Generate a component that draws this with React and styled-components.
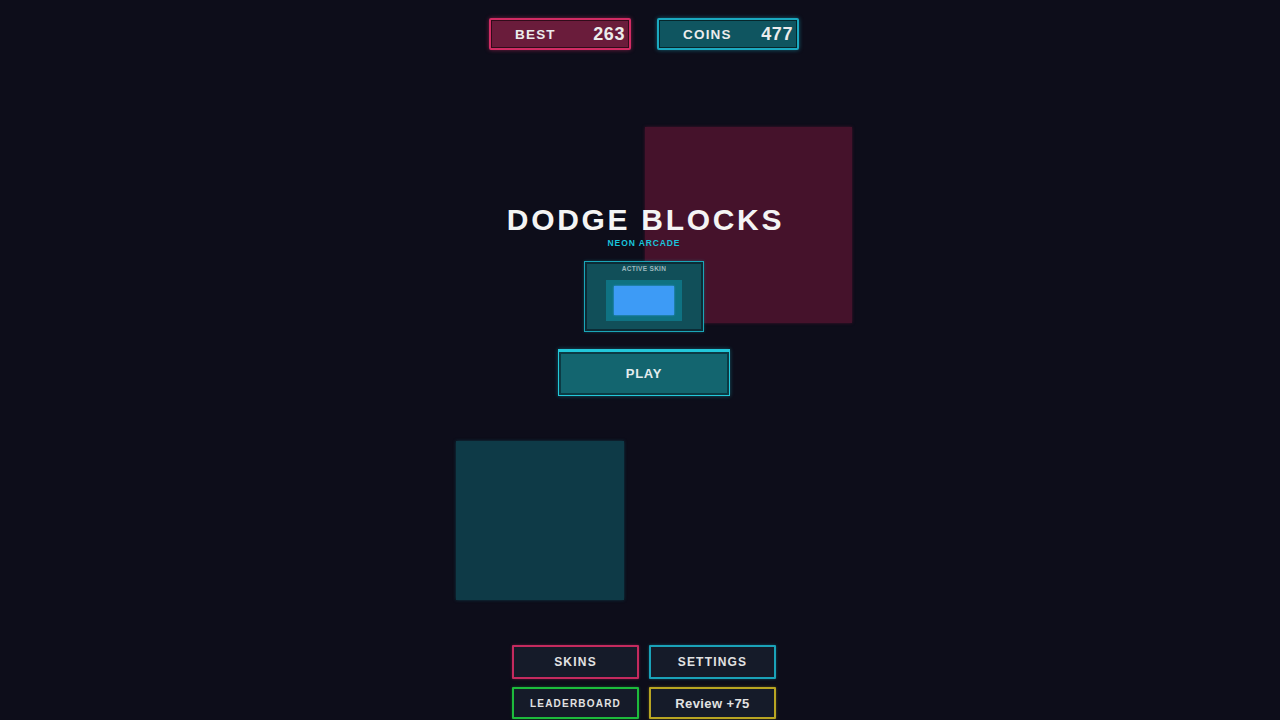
import React from "react";
import styled, { createGlobalStyle } from "styled-components";

const Global = createGlobalStyle`
  html, body { margin: 0; padding: 0; background: #0d0d1a; }
  body { font-family: "Liberation Sans", Arial, sans-serif; }
`;

const Page = styled.div`
  position: relative;
  width: 100%;
  height: 720px;
  overflow: hidden;
  background: #0d0d1a;
  display: flex;
  flex-direction: column;
  align-items: center;
`;

const Block = styled.div`
  position: absolute;
  left: ${(p) => p.$x}px;
  top: ${(p) => p.$y}px;
  width: ${(p) => p.$w}px;
  height: ${(p) => p.$h}px;
  background: ${(p) => p.$color};
  box-shadow: 0 0 3px ${(p) => p.$color};
  z-index: 0;
`;

const Layer = styled.div`
  position: relative;
  z-index: 1;
  box-sizing: border-box;
  display: flex;
  flex-direction: column;
  align-items: center;
  width: 100%;
  height: 100%;
  padding-left: 8px;
`;

const TopBar = styled.div`
  display: flex;
  gap: 26px;
  margin-top: 18px;
`;

const Badge = styled.div`
  box-sizing: border-box;
  width: 142px;
  height: 32px;
  display: flex;
  align-items: center;
  justify-content: space-between;
  padding: 0 4px 0 24px;
  background: ${(p) => p.$fill};
  border: 2px solid ${(p) => p.$border};
  border-radius: 2px;
  box-shadow: inset 0 0 0 1px rgba(0, 0, 0, 0.55), 0 0 4px ${(p) => p.$border}88;
  color: #ececec;
`;

const BadgeLabel = styled.span`
  font-size: 13.5px;
  font-weight: 700;
  letter-spacing: 1.2px;
`;

const BadgeValue = styled.span`
  font-size: 18px;
  font-weight: 700;
  letter-spacing: 0.6px;
`;

const Title = styled.h1`
  margin: 155px 0 0;
  font-family: "Liberation Sans", Arial, sans-serif;
  font-size: 30px;
  line-height: 30px;
  font-weight: 700;
  letter-spacing: 2.7px;
  color: #f4f4f4;
  padding-left: 3px;
`;

const Subtitle = styled.div`
  margin-top: 3px;
  font-size: 8.5px;
  font-weight: 700;
  letter-spacing: 0.9px;
  color: #19c3dc;
  line-height: 10px;
`;

const SkinCard = styled.div`
  box-sizing: border-box;
  margin-top: 13px;
  width: 120px;
  height: 71px;
  background: #114f59;
  border: 1px solid #1aa6b8;
  box-shadow: inset 0 0 0 2px #0c2b35, 0 0 3px #1aa6b855;
  display: flex;
  flex-direction: column;
  align-items: center;
`;

const SkinLabel = styled.div`
  margin-top: 3px;
  font-size: 6.5px;
  font-weight: 700;
  letter-spacing: 0.3px;
  color: #9db7be;
  line-height: 8px;
`;

const SkinFrame = styled.div`
  margin-top: 7px;
  width: 76px;
  height: 41px;
  background: #0f7282;
  display: flex;
  align-items: center;
  justify-content: center;
`;

const SkinBlock = styled.div`
  width: 60px;
  height: 29px;
  background: #3d9bf6;
  box-shadow: 0 0 2px #3d9bf6;
`;

const PlayButton = styled.button`
  box-sizing: border-box;
  margin-top: 17px;
  width: 172px;
  height: 47px;
  background: #13656f;
  border: 1px solid #22c8da;
  border-top-width: 3px;
  box-shadow: inset 0 0 0 2px #0c3a44, 0 0 4px #22c8da66;
  color: #e4ecee;
  font-family: "Liberation Sans", Arial, sans-serif;
  font-size: 13px;
  font-weight: 700;
  letter-spacing: 0.8px;
  cursor: pointer;
  padding: 0;
`;

const Spacer = styled.div`
  flex: 1;
`;

const Menu = styled.div`
  display: grid;
  grid-template-columns: 127px 127px;
  grid-template-rows: 34px 32px;
  column-gap: 10px;
  row-gap: 8px;
  margin-bottom: 1px;
`;

const MenuButton = styled.button`
  box-sizing: border-box;
  background: #151b29;
  border: 2px solid ${(p) => p.$border};
  border-radius: 1px;
  box-shadow: 0 0 3px ${(p) => p.$border}66;
  color: #e2e2e2;
  font-family: "Liberation Sans", Arial, sans-serif;
  font-size: ${(p) => p.$size || 12}px;
  font-weight: 700;
  letter-spacing: ${(p) => (p.$spacing != null ? p.$spacing : 1.2)}px;
  padding: 0;
  cursor: pointer;
`;

export default function App() {
  return (
    <>
      <Global />
      <Page>
        <Block $x={645} $y={127} $w={207} $h={196} $color="#45122b" />
        <Block $x={456} $y={441} $w={168} $h={159} $color="#0e3a47" />
        <Layer>
          <TopBar>
            <Badge $fill="#6a1c3b" $border="#d12c64">
              <BadgeLabel>BEST</BadgeLabel>
              <BadgeValue>263</BadgeValue>
            </Badge>
            <Badge $fill="#0f5560" $border="#1ba9c0">
              <BadgeLabel>COINS</BadgeLabel>
              <BadgeValue>477</BadgeValue>
            </Badge>
          </TopBar>
          <Title>DODGE BLOCKS</Title>
          <Subtitle>NEON ARCADE</Subtitle>
          <SkinCard>
            <SkinLabel>ACTIVE SKIN</SkinLabel>
            <SkinFrame>
              <SkinBlock />
            </SkinFrame>
          </SkinCard>
          <PlayButton>PLAY</PlayButton>
          <Spacer />
          <Menu>
            <MenuButton $border="#c42a5e">SKINS</MenuButton>
            <MenuButton $border="#1aa2b8">SETTINGS</MenuButton>
            <MenuButton $border="#1dbb3c" $size={10} $spacing={1.2}>LEADERBOARD</MenuButton>
            <MenuButton $border="#b8a522" $size={13} $spacing={0.4}>Review +75</MenuButton>
          </Menu>
        </Layer>
      </Page>
    </>
  );
}
